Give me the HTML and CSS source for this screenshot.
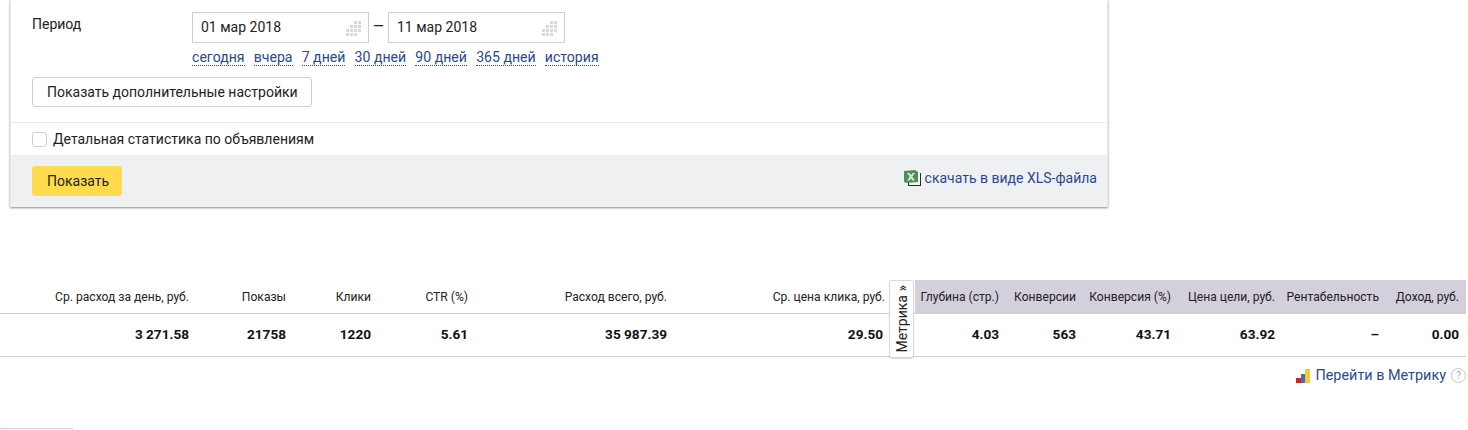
FILE: index.html
```html
<!DOCTYPE html>
<html>
  <head>
    <meta charset="utf-8">
    <title>Статистика</title>
    <link rel="stylesheet" href="styles.css">
  </head>
  <body>
    <div class="panel">
      <div class="panelMain">
        <div class="period">
          <div class="periodLabel">Период</div>
          <div>
            <div class="dates">
              <div class="dateBox">
                <span>01 мар 2018</span>
                <svg class="calIcon" width="15" height="15" viewBox="0 0 15 15"><path fill="#d9d9d9" d="M8 0h3v3H8zM12 0h3v3h-3zM4 4h3v3H4zM8 4h3v3H8zM12 4h3v3h-3zM0 8h3v3H0zM4 8h3v3H4zM8 8h3v3H8zM12 8h3v3h-3zM0 12h3v3H0zM4 12h3v3H4zM8 12h3v3H8z"/></svg>
              </div>
              <div class="dash">—</div>
              <div class="dateBox">
                <span>11 мар 2018</span>
                <svg class="calIcon" width="15" height="15" viewBox="0 0 15 15"><path fill="#d9d9d9" d="M8 0h3v3H8zM12 0h3v3h-3zM4 4h3v3H4zM8 4h3v3H8zM12 4h3v3h-3zM0 8h3v3H0zM4 8h3v3H4zM8 8h3v3H8zM12 8h3v3h-3zM0 12h3v3H0zM4 12h3v3H4zM8 12h3v3H8z"/></svg>
              </div>
            </div>
            <div class="quickLinks">
              <a>сегодня</a>
              <a>вчера</a>
              <a>7 дней</a>
              <a>30 дней</a>
              <a>90 дней</a>
              <a>365 дней</a>
              <a>история</a>
            </div>
          </div>
        </div>
        <button type="button" class="btn btnMore">Показать дополнительные настройки</button>
      </div>
      <div class="detail">
        <span class="checkbox"></span>
        <span>Детальная статистика по объявлениям</span>
      </div>
      <div class="panelFoot">
        <button type="button" class="btn btnYellow">Показать</button>
        <div class="xls">
          <svg width="17" height="16" viewBox="0 0 17 16">
            <path fill="#2b2b2b" d="M4 3h13v13H4z"/>
            <path fill="#f6f6f0" d="M5 3h11v12H5z"/>
            <path fill="#4d8f5a" d="M0 1l11-1 3 2v10l-11 1-3-1z"/>
            <path fill="#d3e8d4" d="M3 3h2.500l1.500 2.200L8.500 3H11L8.300 6.800 11 10.500H8.500L7 8.400 5.500 10.500H3l2.700-3.700z"/>
          </svg>
          <a>скачать в виде XLS-файла</a>
        </div>
      </div>
    </div>

    <div class="statsWrap">
      <table class="stats">
        <colgroup>
          <col class="c196"><col class="c97"><col class="c85"><col class="c97"><col class="c199"><col class="c218">
          <col class="c23">
          <col class="c91"><col class="c77"><col class="c95"><col class="c104"><col class="c104"><col class="c80">
        </colgroup>
        <thead>
          <tr>
            <th>Ср. расход за день, руб.</th>
            <th>Показы</th>
            <th>Клики</th>
            <th>CTR (%)</th>
            <th>Расход всего, руб.</th>
            <th>Ср. цена клика, руб.</th>
            <th class="gap"></th>
            <th class="lilac">Глубина (стр.)</th>
            <th class="lilac">Конверсии</th>
            <th class="lilac">Конверсия (%)</th>
            <th class="lilac">Цена цели, руб.</th>
            <th class="lilac">Рентабельность</th>
            <th class="lilac">Доход, руб.</th>
          </tr>
        </thead>
        <tbody>
          <tr>
            <td>3 271.58</td>
            <td>21758</td>
            <td>1220</td>
            <td>5.61</td>
            <td>35 987.39</td>
            <td class="shift">29.50</td>
            <td></td>
            <td>4.03</td>
            <td>563</td>
            <td>43.71</td>
            <td>63.92</td>
            <td>–</td>
            <td>0.00</td>
          </tr>
        </tbody>
      </table>
      <div class="metrikaTab"><span>Метрика »</span></div>
    </div>

    <div class="metrikaLink">
      <svg width="14" height="14" viewBox="0 0 14 14">
        <path fill="#d0202e" d="M0 9h5v5H0z"/>
        <path fill="#3f6fb0" d="M5 5h4v9H5z"/>
        <path fill="#f5c93a" d="M9 0h5v14H9z"/>
      </svg>
      <a>Перейти в Метрику</a>
      <span class="help">?</span>
    </div>

    <div class="cutBtn"></div>
  </body>
</html>
```

FILE: styles.css
```css
html, body {
  margin: 0;
  height: 430px;
  overflow: hidden;
}
body {
  font-family: Roboto, "Noto Sans", sans-serif;
  font-size: 14px;
  color: #222;
  background: #fff;
}
a {
  color: #2a4a8d;
}
.panel {
  width: 1098px;
  margin-left: 10px;
  box-sizing: border-box;
  border-left: 1px solid #e8e8e8;
  border-right: 1px solid #e8e8e8;
  box-shadow: 0 1px 2px rgba(0,0,0,0.45);
}
.panelMain {
  padding: 12px 21px 15px;
  border-bottom: 1px solid #ebebeb;
}
.period {
  display: flex;
}
.periodLabel {
  width: 160px;
  padding-top: 4px;
}
.dates {
  display: flex;
}
.dateBox {
  width: 177px;
  height: 31px;
  box-sizing: border-box;
  border: 1px solid #cfcfcf;
  padding: 0 7px 2px 8px;
  display: flex;
  align-items: center;
  justify-content: space-between;
}
.calIcon {
  margin-top: 3px;
}
.dash {
  width: 19px;
  text-align: center;
  line-height: 29px;
}
.quickLinks {
  display: flex;
  gap: 9.200px;
  margin-top: 5px;
  height: 19px;
  line-height: 18px;
  font-size: 14.100px;
}
.quickLinks a {
  border-bottom: 1px dotted #2a4a8d;
  height: 17px;
}
.btn {
  display: block;
  font-family: inherit;
  font-size: 14px;
  color: #222;
  height: 30px;
  padding: 0 14px;
  background: #fff;
  border: 1px solid #d0d0d0;
  border-radius: 3px;
  white-space: nowrap;
}
.btnMore {
  margin-top: 10px;
  width: 280px;
}
.btnYellow {
  width: 90px;
  background: #ffdb4d;
  border-color: #ffdb4d;
}
.detail {
  height: 32px;
  padding-left: 21px;
  display: flex;
  align-items: center;
  gap: 6px;
}
.checkbox {
  width: 15px;
  height: 15px;
  box-sizing: border-box;
  border: 1px solid #cfcfcf;
  border-radius: 3px;
}
.panelFoot {
  height: 52px;
  box-sizing: border-box;
  padding: 0 10px 0 21px;
  background: #eff0f2;
  display: flex;
  align-items: center;
  justify-content: space-between;
}
.xls {
  display: flex;
  align-items: center;
  gap: 4px;
  margin-bottom: 6px;
}

.statsWrap {
  position: relative;
  margin-top: 73px;
  width: 1466px;
}
.stats {
  width: 1466px;
  table-layout: fixed;
  border-collapse: collapse;
}
.c196 { width: 196px; }
.c97 { width: 97px; }
.c85 { width: 85px; }
.c199 { width: 199px; }
.c218 { width: 218px; }
.c23 { width: 23px; }
.c91 { width: 91px; }
.c77 { width: 77px; }
.c95 { width: 95px; }
.c104 { width: 104px; }
.c80 { width: 80px; }
.stats th {
  height: 33px;
  padding: 2px 7px 0 0;
  box-sizing: border-box;
  font-size: 12.100px;
  font-weight: normal;
  text-align: right;
  white-space: nowrap;
  border-bottom: 1px solid #cfcfcf;
}
.stats td {
  height: 43px;
  box-sizing: border-box;
  padding: 0 7px 2px 0;
  font-size: 13.600px;
  font-weight: bold;
  text-align: right;
  color: #111;
  border-bottom: 1px solid #cfcfcf;
}
.stats th.lilac {
  background: #d3d0dc;
  border-bottom-color: #d3d0dc;
}
.stats td.shift {
  padding-right: 9px;
}
.metrikaTab {
  position: absolute;
  left: 889px;
  top: 0;
  width: 25px;
  height: 78px;
  box-sizing: border-box;
  background: #fff;
  border: 1px solid #d8d8d8;
  border-radius: 3px;
  box-shadow: 0 1px 1px rgba(0,0,0,0.15);
  display: flex;
  align-items: center;
  justify-content: center;
}
.metrikaTab span {
  writing-mode: vertical-rl;
  transform: rotate(180deg);
  font-size: 14px;
  white-space: nowrap;
}
.metrikaLink {
  margin-top: 9px;
  width: 1466px;
  display: flex;
  justify-content: flex-end;
  align-items: center;
  gap: 5px;
  height: 20px;
  font-size: 14.400px;
}
.help {
  width: 13px;
  height: 13px;
  border: 1px solid #c4c4c4;
  border-radius: 50%;
  color: #aaa;
  font-size: 10px;
  line-height: 13px;
  text-align: center;
}
.cutBtn {
  margin-top: 42px;
  width: 73px;
  height: 2px;
  box-sizing: border-box;
  border: 1px solid #d0d0d0;
  border-bottom: 0;
  border-radius: 3px 3px 0 0;
}
```
